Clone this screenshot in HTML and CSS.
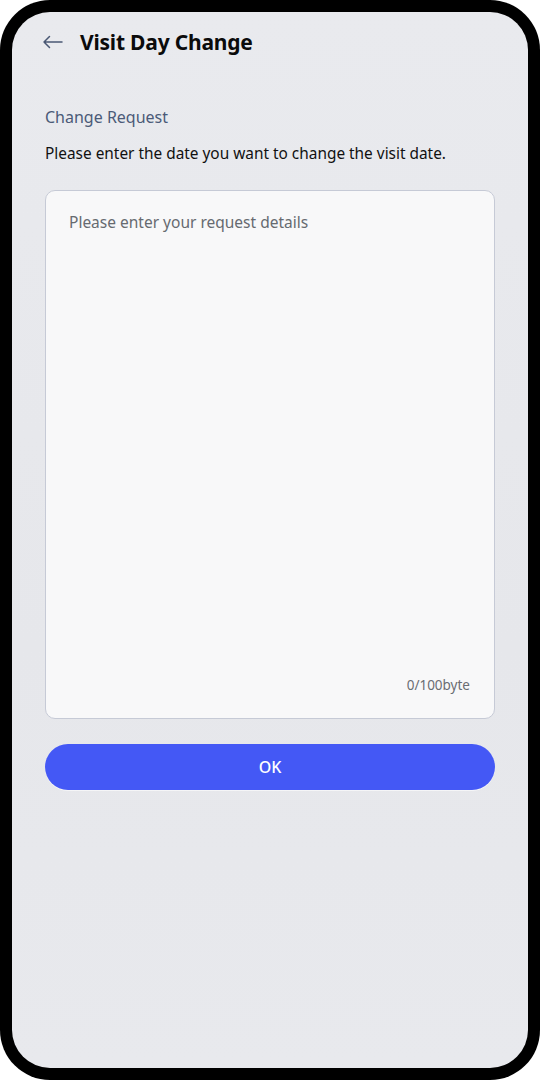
FILE: index.html
```html
<!DOCTYPE html>
<html lang="en">
<head>
<meta charset="utf-8">
<title>Visit Day Change</title>
<link rel="stylesheet" href="styles.css">
</head>
<body>
<div class="device">
  <div class="screen">
    <header class="header">
      <button class="back" aria-label="Back">
        <svg width="22" height="14" viewBox="0 0 22 14" fill="none" stroke="#4a5874" stroke-width="1.5" stroke-linecap="round" stroke-linejoin="round">
          <path d="M20 7H2M7.5 1.5L2 7l5.5 5.5"/>
        </svg>
      </button>
      <h1 class="title">Visit Day Change</h1>
    </header>
    <main class="content">
      <h2 class="label">Change Request</h2>
      <p class="desc">Please enter the date you want to change the visit date.</p>
      <div class="field">
        <div class="placeholder">Please enter your request details</div>
        <div class="counter">0/100byte</div>
      </div>
      <button class="ok">OK</button>
    </main>
  </div>
</div>
</body>
</html>
```
FILE: styles.css
```css
* { box-sizing: border-box; }
html, body { margin: 0; padding: 0; background: #ffffff; }
body { font-family: "Noto Sans", "Open Sans", sans-serif; }
.device {
  width: 540px;
  height: 1080px;
  background: #000;
  border-radius: 50px;
  padding: 12px;
}
.screen {
  height: 100%;
  border-radius: 38px;
  background: linear-gradient(180deg, #e9eaee 0%, #e6e7eb 60%, #e8e9ed 100%);
  padding: 0 33px 0 33px;
  overflow: hidden;
}
.header {
  display: flex;
  align-items: center;
  height: 60px;
}
.back {
  background: none;
  border: 0;
  padding: 0;
  margin: 0 0 0 -3px;
  width: 38px;
  height: 30px;
  display: flex;
  align-items: center;
  cursor: pointer;
}
.title {
  margin: 0;
  font-size: 21px;
  font-weight: 700;
  color: #0b0b0b;
  letter-spacing: -0.2px;
}
.content { padding-top: 33px; }
.label {
  margin: 0;
  font-size: 16px;
  font-weight: 400;
  color: #4b5a78;
  line-height: 24px;
}
.desc {
  margin: 13px 0 0;
  font-size: 15.4px;
  color: #111;
  line-height: 24px;
}
.field {
  margin-top: 24px;
  height: 529px;
  background: #f8f8f9;
  border: 1px solid #c6cad6;
  border-radius: 10px;
  padding: 19px 23px 24px;
  display: flex;
  flex-direction: column;
  justify-content: space-between;
}
.placeholder {
  font-size: 15.5px;
  color: #666a70;
  line-height: 24px;
}
.counter {
  align-self: flex-end;
  margin-right: 1px;
  font-size: 13.5px;
  color: #6a6d72;
  line-height: 18px;
}
.ok {
  margin-top: 25px;
  width: 100%;
  height: 46px;
  border: 0;
  border-radius: 23px;
  background: #4458f5;
  color: #fff;
  font-family: inherit;
  font-size: 16px;
  font-weight: 500;
  box-shadow: 0 1px 0 rgba(255,255,255,0.6);
}
```
